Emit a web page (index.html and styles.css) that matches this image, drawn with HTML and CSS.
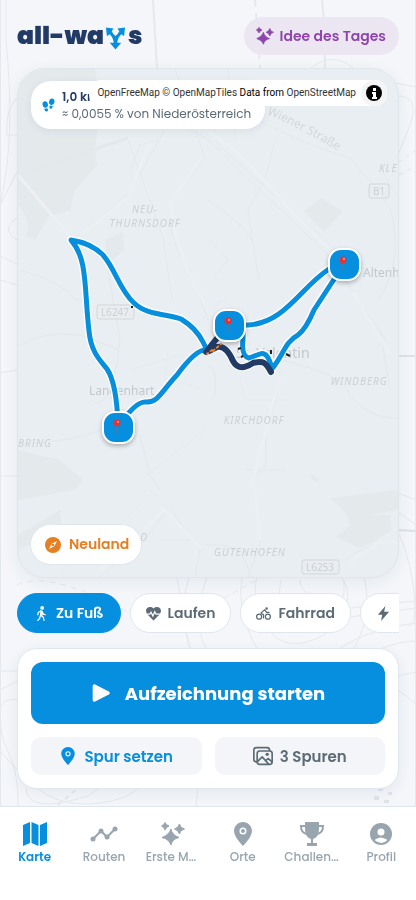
FILE: index.html
```
<!DOCTYPE html>
<html lang="de">
<head>
<meta charset="utf-8">
<meta name="viewport" content="width=device-width, initial-scale=1">
<title>all-ways</title>
<link rel="stylesheet" href="styles.css">
</head>
<body>
<svg class="backdrop" viewBox="0 0 416 900" preserveAspectRatio="xMidYMid slice" aria-hidden="true">
  <g fill="none" stroke="#e5e8ec" stroke-width="1">
    <path d="M153 0 157 68M322 0Q325 25 325 68" stroke-width="2"/>
    <path d="M255 0 260 68" stroke-dasharray="7 6" stroke-width="2"/>
    <path d="M311 68Q333 51 353 68M390 82 416 87M398 96Q420 96 410 125L398 155"/>
    <path d="M17 98Q5 110 7 134M5 135H17M6 0V40Q16 140 0 205M17 172 0 205M17 218Q0 229 17 240M0 256 17 264M0 280 17 285M0 373 17 370M0 476H17"/>
    <path d="M398 163 416 150M399 175 416 166" stroke-dasharray="5 4"/>
    <path d="M398 356H416M398 530 416 531" stroke="#dde2e8" stroke-width="2"/>
    <path d="M17 585C40 575 65 585 89 593L145 620" stroke-dasharray="6 5"/>
    <path d="M177 578 191 655M189 578C178 610 185 640 194 655M207 578C198 600 195 630 207 650" />
    <path d="M224 598 260 578" stroke-dasharray="6 4"/>
    <path d="M398 493 416 500M398 512 416 525M398 533C413 560 422 630 408 625M242 578C235 615 260 680 305 680 350 680 376 620 364 578M257 578C250 600 265 650 302 643 340 636 358 600 342 578M300 580C300 600 340 610 344 593V580M281 580C273 620 300 635 350 612"/>
    <path d="M351 608Q380 604 416 601M350 617Q380 613 416 608M330 656Q360 630 416 623M380 649Q400 641 416 641M398 676 416 672M398 690 416 704"/>
    <path d="M0 671H17M17 681 0 690M17 699Q0 699 0 710C0 760 18 745 18 806M0 751C35 790 50 804 88 804 125 802 145 790 146 770M26 788Q26 815 88 796L110 780M198 788 196 806"/>
    <path d="M58 805 78 788" stroke-dasharray="5 4" stroke-width="2"/>
    <path d="M0 0V900M416 0V900" stroke-width="2"/>
  </g>
  <path fill="#e0e4e8" d="M378 788h5v3h-5zM388 792h4v3h-4zM374 796h5v4h-5zM384 800h5v3h-5z"/>
</svg>

<header class="topbar">
  <a class="logo" href="#" aria-label="all-ways">all-wa<svg viewBox="0 0 22 24" aria-hidden="true"><path d="M1 1 9 2 7 5Q9 9 11 10 13 9 15 5L13 2 21 1 20 10 17 8Q13 12 13 17H17L11 24 5 17H9Q9 12 5 8L2 10Z"/></svg>s</a>
  <button class="idea" type="button">
    <svg class="icon" viewBox="0 0 24 24" aria-hidden="true"><use href="#sparkles"/></svg>Idee des Tages
  </button>
</header>

<main>
  <section class="map" aria-label="Karte">
    <svg class="map-art" viewBox="18 69 380 508" preserveAspectRatio="xMidYMid slice" aria-hidden="true">
      <path fill="#e4e9ec" d="M18 69H95L103 110Q92 145 97 165L75 190 70 211 50 215 35 240 26 236Q32 220 18 205ZM304 211 321 198 343 211 324 232ZM105 240 123 232 124 250 106 266ZM18 450 60 460 83 480 75 490 18 500ZM18 535 60 510 62 530 18 550ZM330 498 398 490V510L370 515 390 515 392 530 372 543 360 548 336 537 350 525 345 512ZM311 474 318 477 319 482 312 480Z"/>
      <g fill="none" stroke="#e3e8eb" stroke-width="1">
        <path d="M20 174 128 138" stroke-width="3"/>
        <path d="M208 140 260 190 330 257 365 310 386 340M215 142 345 258" />
        <path d="M245 112Q290 140 350 158Q370 180 390 208Q405 260 378 300M228 69 235 140M275 140 265 180 248 210 254 250 259 280M18 270Q60 280 75 300H87M208 200Q240 220 252 240M210 240 228 260 215 275M90 400Q112 416 120 340L108 270M130 170 140 145 158 140M380 330 390 390M282 360Q345 375 350 395 370 420 398 418"/>
        <path d="M60 69 210 140M20 176 72 240 80 234 127 195 145 165 170 120M175 69 205 158 171 202Q166 240 190 270L208 320M128 140 163 237 172 300M208 366Q219 370 214 398M18 347Q40 330 80 335L120 350M140 435 150 475 160 490M100 430Q80 440 18 445M280 370Q277 410 266 427V465Q250 480 250 490M254 490 261 540 248 577M245 470H285M205 545Q245 540 250 577M100 577 145 540 168 508 150 490M170 508 200 550 195 577M160 540H195M345 560Q365 545 398 540M380 165Q388 185 398 195"/>
        <path d="M168 350 165 378 200 388M130 370 180 355M240 380 245 400 290 400M105 540 145 500M63 570 90 540M145 476 205 430M190 330 222 300 245 318" opacity=".7"/>
      </g>
      <g fill="none" stroke="#ecf0f3" stroke-width="3">
        <path d="M208 132Q240 150 283 202L328 248M353 292 390 355M18 175 72 239M80 235Q100 220 128 197L150 143M200 160 171 202Q170 240 208 310M255 488 260 540M280 376 266 430 250 490M100 570 165 510 200 548M349 562 380 542H398"/>
      </g>
      <g class="place" text-anchor="middle">
        <text x="145" y="213">NEU-</text><text x="145" y="227">THURNSDORF</text>
        <text x="254" y="424">KIRCHDORF</text><text x="359" y="385">WINDBERG</text>
        <text x="250" y="556">GUTENHOFEN</text><text x="35" y="447">BRING</text>
        <text x="379" y="172" text-anchor="start">KLE</text><text x="144" y="541">D</text>
      </g>
      <path id="wiener" d="M267 114Q300 128 342 153" fill="none"/>
      <text class="street"><textPath href="#wiener">Wiener Straße</textPath></text>
      <g class="town">
        <text x="89" y="395">Langenhart</text><text x="363" y="277">Altenh</text>
        <text x="236" y="358" class="town-main">St. Valentin</text>
      </g>
      <g class="shield" text-anchor="middle">
        <rect x="97" y="305" width="37" height="14" rx="2"/><text x="115" y="316">L6247</text>
        <rect x="369" y="184" width="20" height="14" rx="2"/><text x="379" y="195">B1</text>
        <rect x="302" y="560" width="37" height="14" rx="2"/><text x="320" y="571">L6253</text>
      </g>
      <g fill="none" stroke-linecap="round" stroke-linejoin="round">
        <g stroke="#fdfdf9" stroke-width="8">
          <path id="loop" d="M207 350 203 342Q196 328 181 319C168 314 146 315 134 303C119 289 116 270 103 255Q91 243 71 240C88 259 84 288 89 331C91 353 101 361 107 369Q117 384 118 427Q135 402 145 402C158 403 160 393 177 375Q197 348 207 350Z"/>
          <path id="east" d="M229 325H248C285 323 300 288 329 269L344 264 314 310Q306 329 298 335C285 342 284 354 272 369Q268 351 260 354L249 358Q241 356 243 339V325"/>
          <path d="M207 350 216 348Q226 345 233 361C238 370 245 368 253 363 264 360 266 363 271 372"/>
        </g>
        <use href="#loop" stroke="#078fdf" stroke-width="5"/>
        <use href="#east" stroke="#078fdf" stroke-width="5"/>
        <path d="M206 352 218 337M209 351 217 347Q226 345 233 361C238 370 245 368 253 363 264 360 266 363 271 372" stroke="#223b66" stroke-width="6"/>
        <path d="m212 350-5 4M213 351l8-7" stroke="#e98224" stroke-width="2" stroke-dasharray="2 3"/>
      </g>
      <path d="m238 349 3-1M241 357l2-1M271 350v4M286 354l4 2M132 306v2" stroke="#222" stroke-width="2"/>
      <g class="marker"><rect x="214" y="310" width="31" height="31" rx="12"/><use href="#pushpin" x="228" y="324"/></g>
      <g class="marker"><rect x="329" y="249" width="31" height="31" rx="12"/><use href="#pushpin" x="343" y="263"/></g>
      <g class="marker"><rect x="103" y="412" width="31" height="31" rx="12"/><use href="#pushpin" x="117" y="426"/></g>
    </svg>

    <div class="stats">
      <svg viewBox="0 0 24 24" aria-hidden="true"><g fill="currentColor"><ellipse cx="6" cy="11" rx="5" ry="6" transform="rotate(-9 6 11)"/><path d="m4 19 6-1q3 6-2 6-3 0-4-5Z"/><ellipse cx="18" cy="6" rx="5" ry="6" transform="rotate(9 18 6)"/><path d="m14 13 6 1q-1 6-4 5-3 0-2-6Z"/></g></svg>
      <div><strong>1,0 km</strong><span>≈ 0,0055 % von Niederösterreich</span></div>
    </div>
    <div class="credit">
      <p><a href="#">OpenFreeMap</a> <a href="#">© OpenMapTiles</a> Data from <a href="#">OpenStreetMap</a></p>
      <button type="button" aria-label="Quellenangabe"><svg viewBox="0 0 24 24" aria-hidden="true"><circle cx="12" cy="12" r="8"/><path d="M11 7h3v3h-3zM10 11h4v5h1v2h-5v-2h1v-3h-1z" fill="#fff"/></svg></button>
    </div>
    <button class="newland" type="button">
      <svg viewBox="0 0 24 24" aria-hidden="true"><circle cx="12" cy="12" r="12" fill="currentColor"/><path d="m18 6-4 8-8 4 4-8Z" fill="#fff"/><circle cx="12" cy="12" r="2" fill="currentColor"/></svg>Neuland
    </button>
  </section>

  <div class="modes">
    <button class="chip active" type="button"><svg viewBox="0 0 24 24" aria-hidden="true"><circle cx="13" cy="3" r="3" fill="currentColor"/><path d="m12 8-1 7 4 3 1 5M10 16l-1 4-3 3M11 8 7 10 6 14M13 9l2 4 3 1" fill="none" stroke="currentColor" stroke-width="2" stroke-linecap="round" stroke-linejoin="round"/><path d="m10 7 4 1v7l-4 1Z" fill="currentColor"/></svg>Zu Fuß</button>
    <button class="chip" type="button"><svg viewBox="0 0 24 24" aria-hidden="true"><path d="M12 23 2 13C-4 5 5-2 12 4c7-6 16 1 10 9Z" fill="currentColor"/><path d="M1 13h5l2-3 3 6 3-7 2 4h7" fill="none" stroke="#fff" stroke-width="2"/></svg>Laufen</button>
    <button class="chip" type="button"><svg viewBox="0 0 24 24" aria-hidden="true"><g fill="none" stroke="currentColor" stroke-width="2" stroke-linecap="round" stroke-linejoin="round"><circle cx="5" cy="17" r="4"/><circle cx="19" cy="17" r="4"/><path d="M12 19v-5l-4-3 6-5 3 4h4"/></g><circle cx="17" cy="4" r="2" fill="currentColor"/></svg>Fahrrad</button>
    <button class="chip" type="button" aria-label="E-Bike"><svg viewBox="0 0 24 24" aria-hidden="true"><path d="M15 0 3 14h7L8 24l13-15h-8Z" fill="currentColor"/></svg></button>
  </div>

  <section class="panel">
    <button class="start" type="button"><svg viewBox="0 0 24 24" aria-hidden="true"><path d="M4 3.500 20.500 12 4 20.500Z" fill="currentColor" stroke="currentColor" stroke-width="4" stroke-linejoin="round"/></svg>Aufzeichnung starten</button>
    <div class="tools">
      <button class="tool set" type="button"><svg viewBox="0 0 24 24" aria-hidden="true"><use href="#pin"/></svg>Spur setzen</button>
      <button class="tool" type="button"><svg viewBox="0 0 24 24" aria-hidden="true"><g fill="none" stroke="currentColor" stroke-width="2" stroke-linejoin="round"><rect x="5" y="6" width="18" height="16" rx="3"/><path d="M5 19H4q-3 0-3-3V5q0-3 3-3h13q3 0 3 4M5 19l6-6 8 9M15 18l3-3 5 4"/></g><circle cx="17" cy="10" r="2" fill="currentColor"/></svg>3 Spuren</button>
    </div>
  </section>
</main>

<nav class="tabs" aria-label="Hauptnavigation">
  <a class="current" href="#"><svg viewBox="0 0 24 24" aria-hidden="true"><path d="M0 3 7 0v21l-7 3ZM8.500 0 15.500 3v21l-7-3ZM17 3l7-3v21l-7 3Z" fill="currentColor"/></svg><span>Karte</span></a>
  <a href="#"><svg viewBox="0 0 24 24" aria-hidden="true"><path d="M1 17 9 9l6 6 8-8" fill="none" stroke="currentColor" stroke-width="2"/><g fill="currentColor"><circle cx="1" cy="17" r="2.500"/><circle cx="9" cy="9" r="2.500"/><circle cx="15" cy="15" r="2.500"/><circle cx="23" cy="7" r="2.500"/></g></svg><span>Routen</span></a>
  <a href="#"><svg class="big" viewBox="0 0 24 24" aria-hidden="true"><use href="#sparkles"/></svg><span>Erste Momente</span></a>
  <a href="#"><svg viewBox="0 0 24 24" aria-hidden="true"><use href="#pin"/></svg><span>Orte</span></a>
  <a href="#"><svg viewBox="0 0 24 24" aria-hidden="true"><path d="M5 0h14v7q0 8-6 10v4h4v3H7v-3h4v-4q-6-2-6-10Z" fill="currentColor"/><path d="M5 4H1q0 7 6 8M19 4h4q0 7-6 8" fill="none" stroke="currentColor" stroke-width="2"/></svg><span>Challenges</span></a>
  <a href="#"><svg viewBox="0 0 24 24" aria-hidden="true"><circle cx="12" cy="12" r="11" fill="currentColor"/><circle cx="12" cy="10" r="3.500" fill="#fff"/><path d="M5.500 18q6-5 13 0-6 6-13 0Z" fill="#fff"/></svg><span>Profil</span></a>
</nav>

<svg class="symbols" aria-hidden="true">
  <symbol id="sparkles" viewBox="0 0 24 24"><path fill="currentColor" stroke="currentColor" stroke-linejoin="round" d="M10 7Q11 13 18 15.500 11 17 10 23 8 17 1 15.500 8 13 10 7ZM4 .5Q5 3 8 4 5 5 4 8 3 5 .5 4 3 3 4 .5ZM18.500 2Q19 6 23.500 7 19 8 18.500 12 17 8 13.500 7 17 6 18.500 2Z"/></symbol>
  <symbol id="pin" viewBox="0 0 24 24"><path fill="currentColor" fill-rule="evenodd" d="M12 0C7 0 3 4 3 9c0 6 9 15 9 15s9-9 9-15c0-5-4-9-9-9Zm0 5.500a3.500 3.500 0 1 1 0 7 3.500 3.500 0 0 1 0-7Zm0 1.500a2 2 0 1 0 0 4 2 2 0 0 0 0-4Z"/></symbol>
  <g id="pushpin"><path d="M-.5 0H.5V7H-.5Z" fill="#7d6c7c"/><circle cy="-3" r="3.500" fill="#df3438"/><circle cx="1" cy="-4" r="1" fill="#ff9c9c"/></g>
</svg>
</body>
</html>
```
FILE: styles.css
```
* { box-sizing: border-box; }
body {
  margin: 0;
  min-height: 100vh;
  display: flex;
  flex-direction: column;
  background: #f4f6f9;
  color: #5c6b75;
  font-family: Poppins, Inter, "Open Sans", sans-serif;
}
button { border: 0; font: inherit; color: inherit; cursor: pointer; }
a { color: inherit; text-decoration: none; }
svg { flex: none; }
.backdrop { position: fixed; inset: 0; width: 100%; height: 100%; z-index: -1; }
.symbols { position: absolute; width: 0; height: 0; }

.topbar {
  display: flex;
  align-items: center;
  justify-content: space-between;
  padding: 17px 17px 13px;
}
.logo {
  display: flex;
  align-items: center;
  color: #223b66;
  font-size: 25px;
  font-weight: 900;
  line-height: 38px;
}
.logo svg { width: 21px; height: 24px; margin: 3px 2px 0 1px; fill: #078fdf; }
.idea {
  display: flex;
  align-items: center;
  gap: 6px;
  height: 38px;
  padding: 0 13px 0 12px;
  border-radius: 20px;
  background: #ebe6f2;
  color: #8e44ad;
  font-size: 14px;
  font-weight: 600;
}
.icon { width: 18px; height: 18px; }

main {
  flex: 1;
  display: flex;
  flex-direction: column;
  gap: 15px;
  padding: 0 17px 17px;
}
.map {
  position: relative;
  flex: 1;
  min-height: 360px;
  overflow: hidden;
  border: 1px solid #dfe5ea;
  border-radius: 28px;
  background: #e9eef2;
  box-shadow: 0 4px 16px #223b6614;
}
.map-art { position: absolute; inset: 0; width: 100%; height: 100%; }
.map-art text { font-family: "Noto Sans", sans-serif; fill: #cbd0d5; }
.place text { font-size: 10px; font-style: italic; letter-spacing: 1px; }
.map-art .street { font-size: 12px; fill: #d3d7db; }
.town text { font-size: 12px; fill: #c3c8cd; }
.town .town-main { font-size: 14px; }
.shield rect { fill: #e9edf0; stroke: #d3d7db; }
.shield text { font-size: 10px; }
.marker rect { fill: #078fdf; stroke: #fff; stroke-width: 2; filter: drop-shadow(0 2px 2px #0004); }

.stats {
  position: absolute;
  top: 12px;
  left: 13px;
  display: flex;
  align-items: center;
  gap: 7px;
  height: 48px;
  padding: 0 14px 0 11px;
  border-radius: 20px;
  background: #fff;
  box-shadow: 0 2px 8px #223b6614;
  font-size: 12px;
  line-height: 17px;
  white-space: nowrap;
}
.stats svg { width: 13px; height: 16px; color: #078fdf; }
.stats strong { display: block; color: #223b66; font-weight: 600; }
.credit {
  position: absolute;
  top: 11px;
  right: 11px;
  display: flex;
  align-items: center;
  gap: 5px;
  height: 26px;
  padding-left: 8px;
  border-radius: 12px;
  background: #fff;
  color: #000;
  font: 10px/20px Roboto, "Liberation Sans", sans-serif;
}
.credit p { margin: 0; white-space: nowrap; }
.credit a { color: #333; }
.credit button { display: flex; padding: 1px; border-radius: 50%; background: #f4f4f4; }
.credit svg { width: 24px; height: 24px; }
.newland {
  position: absolute;
  left: 13px;
  bottom: 13px;
  display: flex;
  align-items: center;
  gap: 8px;
  height: 39px;
  padding: 0 12px 0 14px;
  border-radius: 20px;
  background: #fff;
  box-shadow: 0 0 0 1px #e0e6ec;
  color: #e67e22;
  font-size: 14px;
  font-weight: 600;
}
.newland svg { width: 16px; height: 16px; }

.modes { display: flex; gap: 9px; overflow: hidden; }
.chip {
  flex: none;
  display: flex;
  align-items: center;
  gap: 7px;
  height: 40px;
  padding: 0 15px;
  border: 1px solid #dfe6ee;
  border-radius: 20px;
  background: #fff;
  font-size: 14px;
  font-weight: 600;
}
.chip svg { width: 15px; height: 15px; }
.chip.active { padding: 0 16px; border-color: #078fdf; background: #078fdf; color: #fff; }
.chip:last-child { width: 110px; }

.panel {
  padding: 13px;
  border: 1px solid #dfe6ee;
  border-radius: 20px;
  background: #fff;
  box-shadow: 0 4px 14px #223b6614;
}
.start {
  display: flex;
  align-items: center;
  justify-content: center;
  gap: 14px;
  width: 100%;
  height: 62px;
  border-radius: 12px;
  background: #078fdf;
  color: #fff;
  font-size: 18px;
  font-weight: 700;
}
.start svg { width: 20px; height: 20px; }
.tools { display: grid; grid-template-columns: 1fr 1fr; gap: 13px; margin-top: 13px; }
.tool {
  display: flex;
  align-items: center;
  justify-content: center;
  gap: 7px;
  height: 38px;
  padding: 0;
  border-radius: 10px;
  background: #f4f5f8;
  font-size: 15px;
  font-weight: 600;
}
.tool svg { width: 20px; height: 20px; }
.tool.set { color: #078fdf; }
.tool.set svg { width: 18px; height: 18px; }

.tabs {
  display: grid;
  grid-template-columns: repeat(6, 1fr);
  height: 94px;
  padding-top: 15px;
  border-top: 1px solid #dfe6ee;
  background: #fff;
  color: #98a5af;
  font-size: 12px;
  font-weight: 500;
  line-height: 18px;
}
.tabs a { display: flex; flex-direction: column; align-items: center; gap: 2px; min-width: 0; padding: 0 7px; }
.tabs svg { width: 24px; height: 24px; overflow: visible; }
.tabs .big { width: 28px; }
.tabs span { max-width: 100%; overflow: hidden; text-overflow: ellipsis; white-space: nowrap; }
.tabs .current { color: #078fdf; font-weight: 600; }
```
